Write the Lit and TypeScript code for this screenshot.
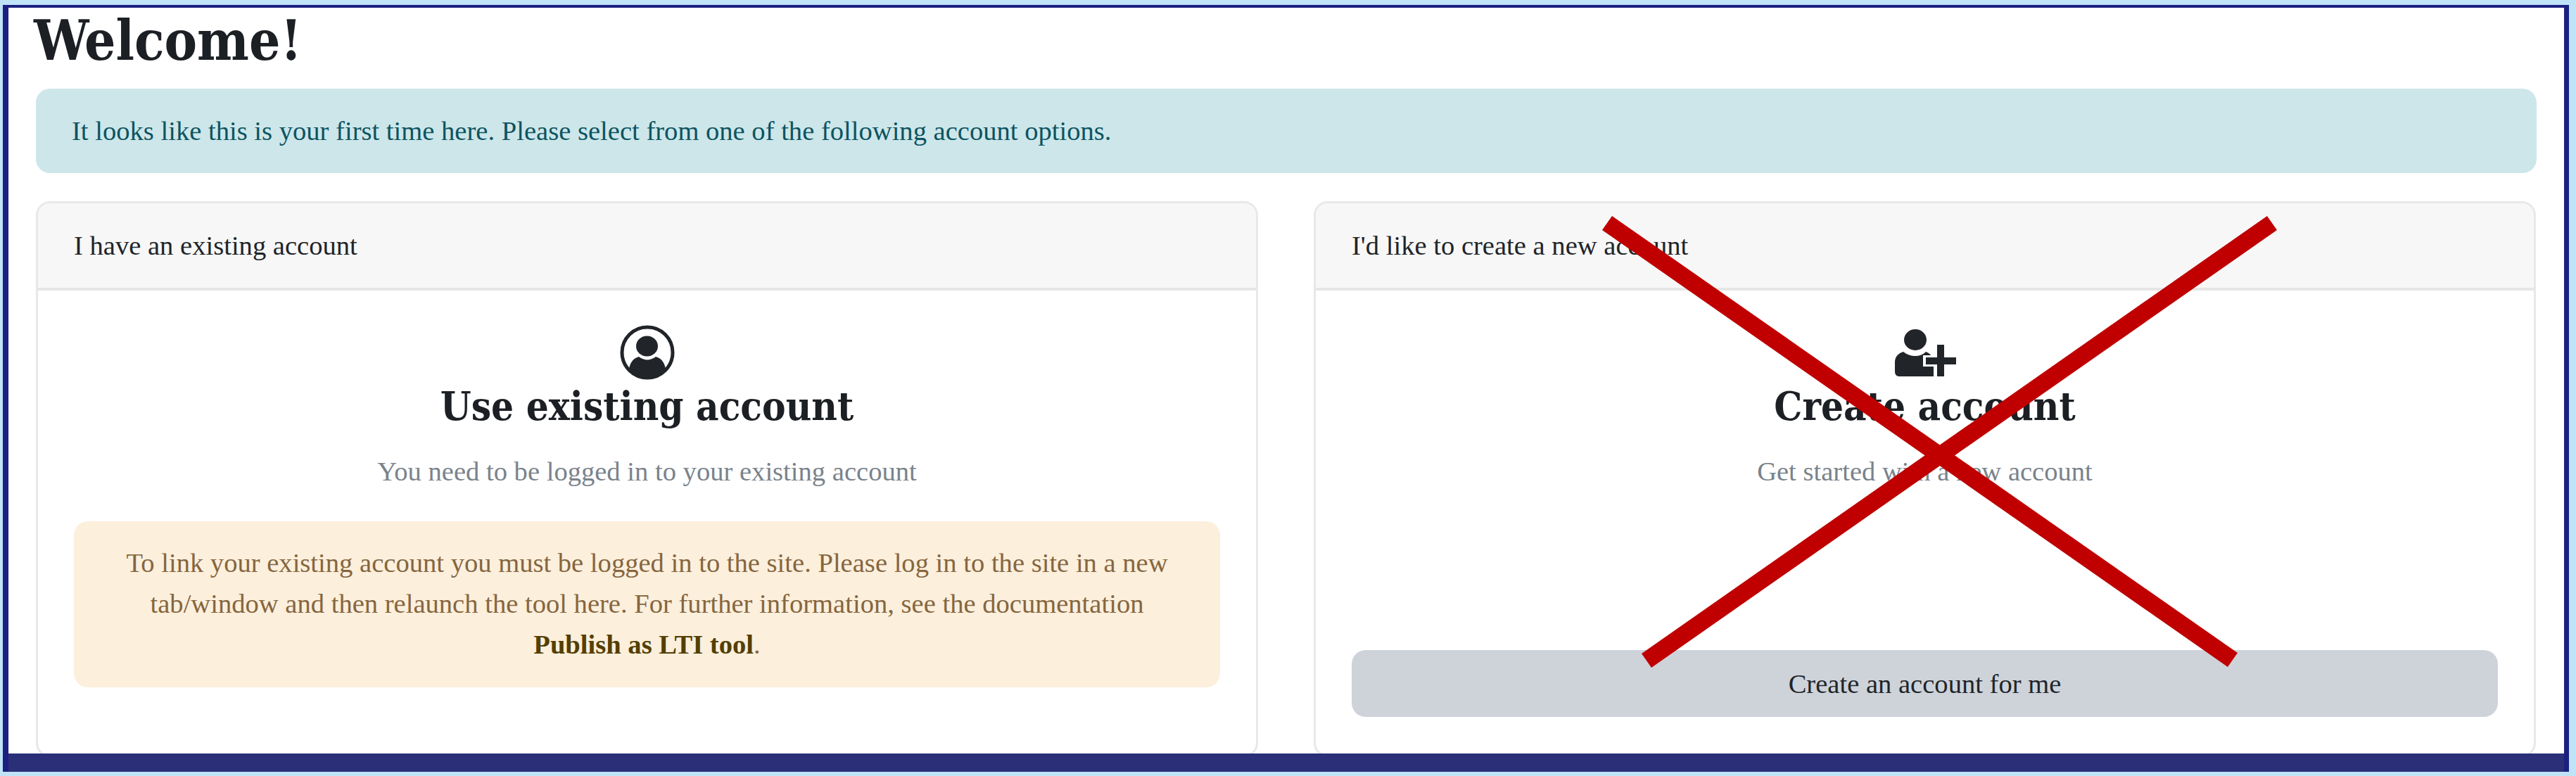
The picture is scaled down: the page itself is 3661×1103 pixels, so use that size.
import { LitElement, html, css } from "lit";
import { customElement } from "lit/decorators.js";

@customElement("app-root")
export class AppRoot extends LitElement {
  static styles = css`
    :host {
      display: block;
      position: relative;
      width: 3661px;
      height: 1103px;
      box-sizing: border-box;
      padding: 7px 10px 6px 4px;
      background: #bfe3f7;
      font-family: "Liberation Serif", "Times New Roman", serif;
      font-size: 38.6px;
      color: #212529;
      overflow: hidden;
    }
    .frame {
      box-sizing: border-box;
      height: 1090px;
      background: #fff;
      border-style: solid;
      border-color: #1b2080;
      border-width: 4px 7px 0 8px;
      box-shadow: inset 0 -26px 0 #2a2f78;
      overflow: hidden;
    }
    .inner {
      box-sizing: border-box;
      height: 1060px;
      padding: 0 39px 0 39px;
      overflow: hidden;
      background: #fff;
    }
    h1 {
      margin: 0 0 0 -3px;
      height: 115px;
      font-family: "DejaVu Serif", serif;
      font-stretch: condensed;
      font-size: 77.6px;
      font-weight: 700;
      line-height: 94px;
      color: #1c1f23;
    }
    .alert-info {
      height: 120px;
      box-sizing: border-box;
      display: flex;
      align-items: center;
      padding: 0 51px;
      border-radius: 20px;
      background: #cde6ea;
      color: #0c5460;
    }
    .cards {
      display: grid;
      grid-template-columns: 1737px 1737px;
      gap: 79px;
      margin-top: 40px;
    }
    .card {
      height: 790px;
      box-sizing: border-box;
      display: flex;
      flex-direction: column;
      border: 3px solid #e8e8e8;
      border-radius: 20px;
      overflow: hidden;
    }
    .card-head {
      height: 124px;
      flex: none;
      box-sizing: border-box;
      display: flex;
      align-items: center;
      padding: 0 51px;
      background: #f7f7f7;
      border-bottom: 4px solid #e6e6e6;
    }
    .card-body {
      flex: 1;
      display: flex;
      flex-direction: column;
      align-items: center;
      padding: 49px 51px 54px;
      min-height: 0;
    }
    .icon {
      display: block;
      height: 78px;
      flex: none;
    }
    h3 {
      margin: 0;
      height: 82px;
      font-family: "DejaVu Serif", serif;
      font-stretch: condensed;
      font-size: 56px;
      font-weight: 700;
      line-height: 74px;
      color: #1c1f23;
      white-space: nowrap;
    }
    .sub {
      margin-top: 25px;
      color: #7a838b;
      line-height: 46px;
    }
    .alert-warn {
      align-self: stretch;
      box-sizing: border-box;
      height: 236px;
      margin-top: 48px;
      padding: 30px 60px;
      border-radius: 20px;
      background: #fcefdc;
      color: #85663f;
      text-align: center;
      line-height: 58px;
    }
    .alert-warn b {
      color: #533f03;
    }
    .btn {
      align-self: stretch;
      margin-top: auto;
      height: 95px;
      box-sizing: border-box;
      border: none;
      border-radius: 20px;
      background: #ced3da;
      color: #212529;
      font: inherit;
    }
    .cross {
      position: absolute;
      left: 0;
      top: 0;
      pointer-events: none;
    }
  `;

  render() {
    return html`
      <div class="frame">
        <div class="inner">
          <h1>Welcome!</h1>
          <div class="alert-info">
            It looks like this is your first time here. Please select from one of the following account options.
          </div>
          <div class="cards">
            <section class="card">
              <div class="card-head">I have an existing account</div>
              <div class="card-body">
                <svg class="icon" width="78" height="78" viewBox="0 0 78 78" fill="#212529">
                  <circle cx="39" cy="39" r="36" fill="none" stroke="#212529" stroke-width="5" />
                  <ellipse cx="38.5" cy="30" rx="15.5" ry="14.5" />
                  <path d="M13 62C15 52 20 47 27 45C31 48 35 49.5 39 49.5C43 49.5 47 48 51 45C58 47 63 52 65 62C58 71 49 75 39 75C29 75 20 71 13 62Z" />
                </svg>
                <h3>Use existing account</h3>
                <div class="sub">You need to be logged in to your existing account</div>
                <div class="alert-warn">
                  To link your existing account you must be logged in to the site. Please log in to the site in a new
                  tab/window and then relaunch the tool here. For further information, see the documentation
                  <b>Publish as LTI tool</b>.
                </div>
              </div>
            </section>
            <section class="card">
              <div class="card-head">I'd like to create a new account</div>
              <div class="card-body">
                <svg class="icon" width="90" height="78" viewBox="0 0 90 78" fill="#212529">
                  <g transform="translate(0 6)">
                    <ellipse cx="31" cy="15" rx="16" ry="15" />
                    <path d="M2 60V47C2 39 7 34 14 32C19 36 25 38 31 38C37 38 42 36 46 32C49 33 52 35 54 38L57 40V67H8C4 67 2 64 2 60Z" />
                    <path d="M42 45H90M67 20V67" fill="none" stroke="#fff" stroke-width="16" />
                    <path d="M46 45H89M67 22V67" fill="none" stroke="#212529" stroke-width="10" />
                  </g>
                </svg>
                <h3>Create account</h3>
                <div class="sub">Get started with a new account</div>
                <button class="btn">Create an account for me</button>
              </div>
            </section>
          </div>
        </div>
      </div>
      <svg class="cross" width="3661" height="1103" viewBox="0 0 3661 1103" fill="#c00000">
        <polygon points="2291,307 2277,327 3166,948 3180,928" />
        <polygon points="3222,307 3236,327 2347,949 2333,929" />
      </svg>
    `;
  }
}
